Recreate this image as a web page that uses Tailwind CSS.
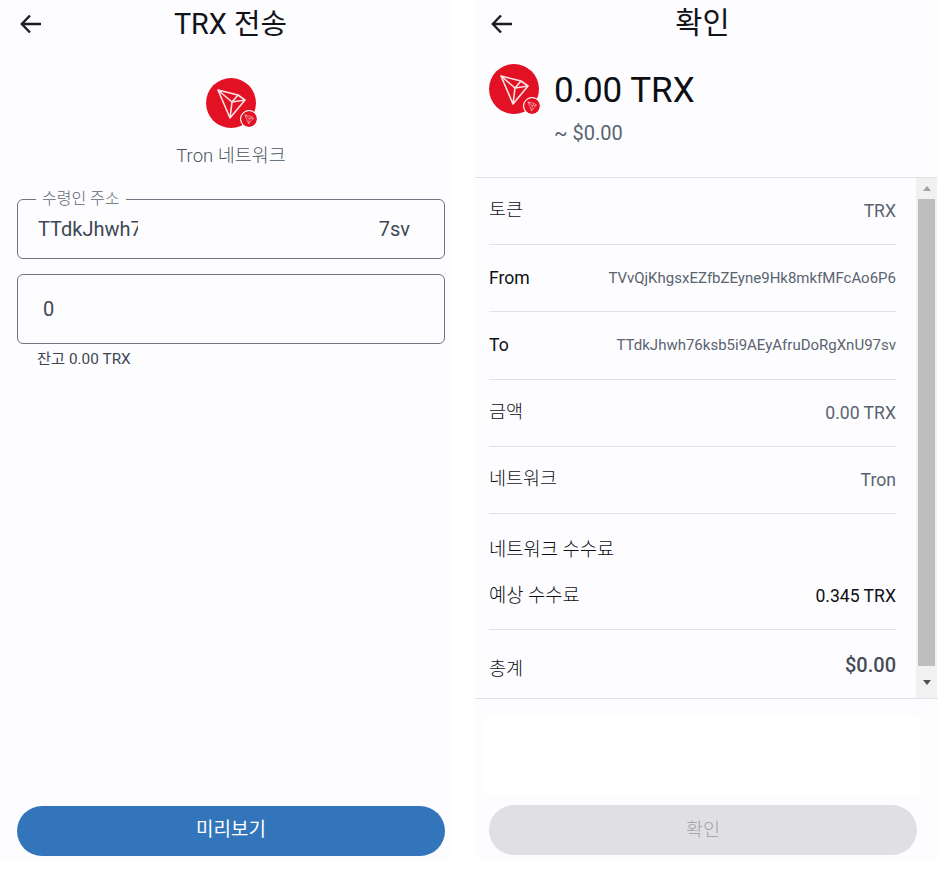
<!doctype html>
<html lang="ko">
<head>
<meta charset="utf-8">
<script src="https://cdn.jsdelivr.net/npm/@tailwindcss/browser@4"></script>
<title>TRX</title>
</head>
<body class="bg-white font-['Roboto','Noto_Sans_CJK_KR',sans-serif] text-[#0d0f14]">
<svg class="hidden" width="0" height="0">
  <symbol id="tron" viewBox="0 0 50 50">
    <circle cx="25" cy="25" r="25" fill="#e21224"/>
    <path d="M12 12 32 17 39 22 24 40ZM12 12 26 24 24 40M26 24 39 22M26 24 32 17" fill="none" stroke="#fbe3e5" stroke-width="1.6" stroke-linejoin="round"/>
  </symbol>
  <symbol id="back" viewBox="0 0 24 24">
    <path d="M22 12H3M11 3.5 2.8 12l8.2 8.5" fill="none" stroke="#1c1e22" stroke-width="2.4"/>
  </symbol>
</svg>
<div class="flex w-[951px] h-[887px] overflow-hidden items-start">

  <!-- left panel -->
  <section class="w-[450px] h-[862px] bg-[#fdfdff] flex flex-col pl-[17px] pr-[5px] shrink-0">
    <header class="h-[48px] relative flex items-center justify-center">
      <svg class="absolute left-[2px] top-[12px] w-[24px] h-[24px]"><use href="#back"/></svg>
      <h1 class="text-[28.8px] leading-[48px] font-normal text-[#111318] mt-[-1px] ml-[-1px]">TRX 전송</h1>
    </header>
    <div class="flex flex-col items-center mt-[30px]">
      <div class="relative w-[50px] h-[50px]">
        <svg class="w-[50px] h-[50px]"><use href="#tron"/></svg>
        <svg class="absolute right-[-2px] bottom-0 w-[18px] h-[18px] rounded-full border border-white bg-white"><use href="#tron"/></svg>
      </div>
      <p class="mt-[16px] text-[18.5px] leading-[24px] font-light text-[#4a5560]">Tron 네트워크</p>
    </div>
    <div class="relative mt-[31px] h-[60px] rounded-[6px] border border-[#6e7480] flex items-center pl-[20px] pr-[34px] justify-between text-[20px] text-[#3f4754]">
      <span class="absolute left-[18px] top-[-10px] bg-[#fdfdff] px-[6px] text-[16px] leading-[18px] font-light text-[#5f6670]">수령인 주소</span>
      <span class="w-[100px] h-[24px] leading-[24px] overflow-hidden whitespace-nowrap">TTdkJhwh7</span>
      <span class="leading-[24px]">7sv</span>
    </div>
    <div class="mt-[15px] h-[70px] rounded-[6px] border border-[#6e7480] flex items-center pl-[25px] text-[20px] text-[#3f4754]">0</div>
    <p class="mt-[6px] ml-[20px] text-[15.3px] leading-[18px] text-[#3f4754]">잔고 0.00 TRX</p>
    <button class="mt-auto mb-[6px] h-[50px] pb-[1px] rounded-full bg-[#3375bb] text-white text-[19px]">미리보기</button>
  </section>

  <!-- right panel -->
  <section class="ml-[25px] w-[463px] h-[861px] bg-[#fdfdff] flex flex-col shrink-0">
    <header class="h-[46px] relative flex items-center justify-center">
      <svg class="absolute left-[15px] top-[12px] w-[24px] h-[24px]"><use href="#back"/></svg>
      <h1 class="text-[29.5px] leading-[46px] font-normal text-[#111318] ml-[-8px]">확인</h1>
    </header>
    <div class="flex pl-[14px] mt-[18px] h-[113px] gap-[15px]">
      <div class="relative w-[50px] h-[50px]">
        <svg class="w-[50px] h-[50px]"><use href="#tron"/></svg>
        <svg class="absolute right-[-2px] bottom-[-1px] w-[18px] h-[18px] rounded-full border border-white bg-white"><use href="#tron"/></svg>
      </div>
      <div>
        <p class="text-[35px] leading-[52px] mt-[1px] text-[#0d0f14]">0.00 TRX</p>
        <p class="mt-[4px] text-[20px] leading-[24px] text-[#5a6370]">~ $0.00</p>
      </div>
    </div>
    <div class="h-[522px] border-y border-[#e2e3ea] flex">
      <div class="flex-1 pl-[14px] pr-[20px]">
        <div class="h-[67px] border-b border-[#e2e3ea] flex items-center justify-between text-[18.5px]"><span class="font-light">토큰</span><span class="text-[17.6px] text-[#5a6370]">TRX</span></div>
        <div class="h-[67px] border-b border-[#e2e3ea] flex items-center justify-between text-[17.6px]"><span>From</span><span class="text-[15px] text-[#5a6370]">TVvQjKhgsxEZfbZEyne9Hk8mkfMFcAo6P6</span></div>
        <div class="h-[68px] border-b border-[#e2e3ea] flex items-center justify-between text-[17.6px]"><span>To</span><span class="text-[15px] text-[#5a6370]">TTdkJhwh76ksb5i9AEyAfruDoRgXnU97sv</span></div>
        <div class="h-[67px] border-b border-[#e2e3ea] flex items-center justify-between text-[18.5px]"><span class="font-light">금액</span><span class="text-[17.6px] text-[#5a6370]">0.00 TRX</span></div>
        <div class="h-[67px] border-b border-[#e2e3ea] flex items-center justify-between text-[18.5px]"><span class="font-light">네트워크</span><span class="text-[17.6px] text-[#5a6370]">Tron</span></div>
        <div class="h-[116px] border-b border-[#e2e3ea] flex flex-col text-[18.75px]">
          <p class="mt-[24px] leading-[24px] font-light">네트워크 수수료</p>
          <div class="mt-[20px] flex items-center justify-between"><span class="font-light">예상 수수료</span><span class="text-[17.6px] text-[#0d0f14]">0.345 TRX</span></div>
        </div>
        <div class="h-[68px] flex items-center justify-between text-[18.5px]"><span class="font-light mt-[12px]">총계</span><span class="text-[20px] font-medium text-[#454c58] mt-[2px]">$0.00</span></div>
      </div>
      <div class="w-[21px] mr-[1px] bg-[#f1f1f1] flex flex-col items-center shrink-0">
        <div class="h-[21px] flex items-center justify-center"><div class="w-0 h-0 border-x-[4px] border-x-transparent border-b-[5px] border-b-[#a3a3a3]"></div></div>
        <div class="w-[17px] h-[467px] bg-[#bebebe]"></div>
        <div class="flex-1 flex items-center justify-center"><div class="w-0 h-0 border-x-[4px] border-x-transparent border-t-[5px] border-t-[#505050]"></div></div>
      </div>
    </div>
    <div class="mt-[17px] ml-[8px] w-[436px] h-[79px] bg-white"></div>
    <button class="mt-[10px] ml-[14px] w-[428px] h-[50px] pt-[2px] rounded-full bg-[#e0e0e2] text-[18.5px] font-light text-[#9f9fa4]">확인</button>
  </section>
</div>
</body>
</html>
